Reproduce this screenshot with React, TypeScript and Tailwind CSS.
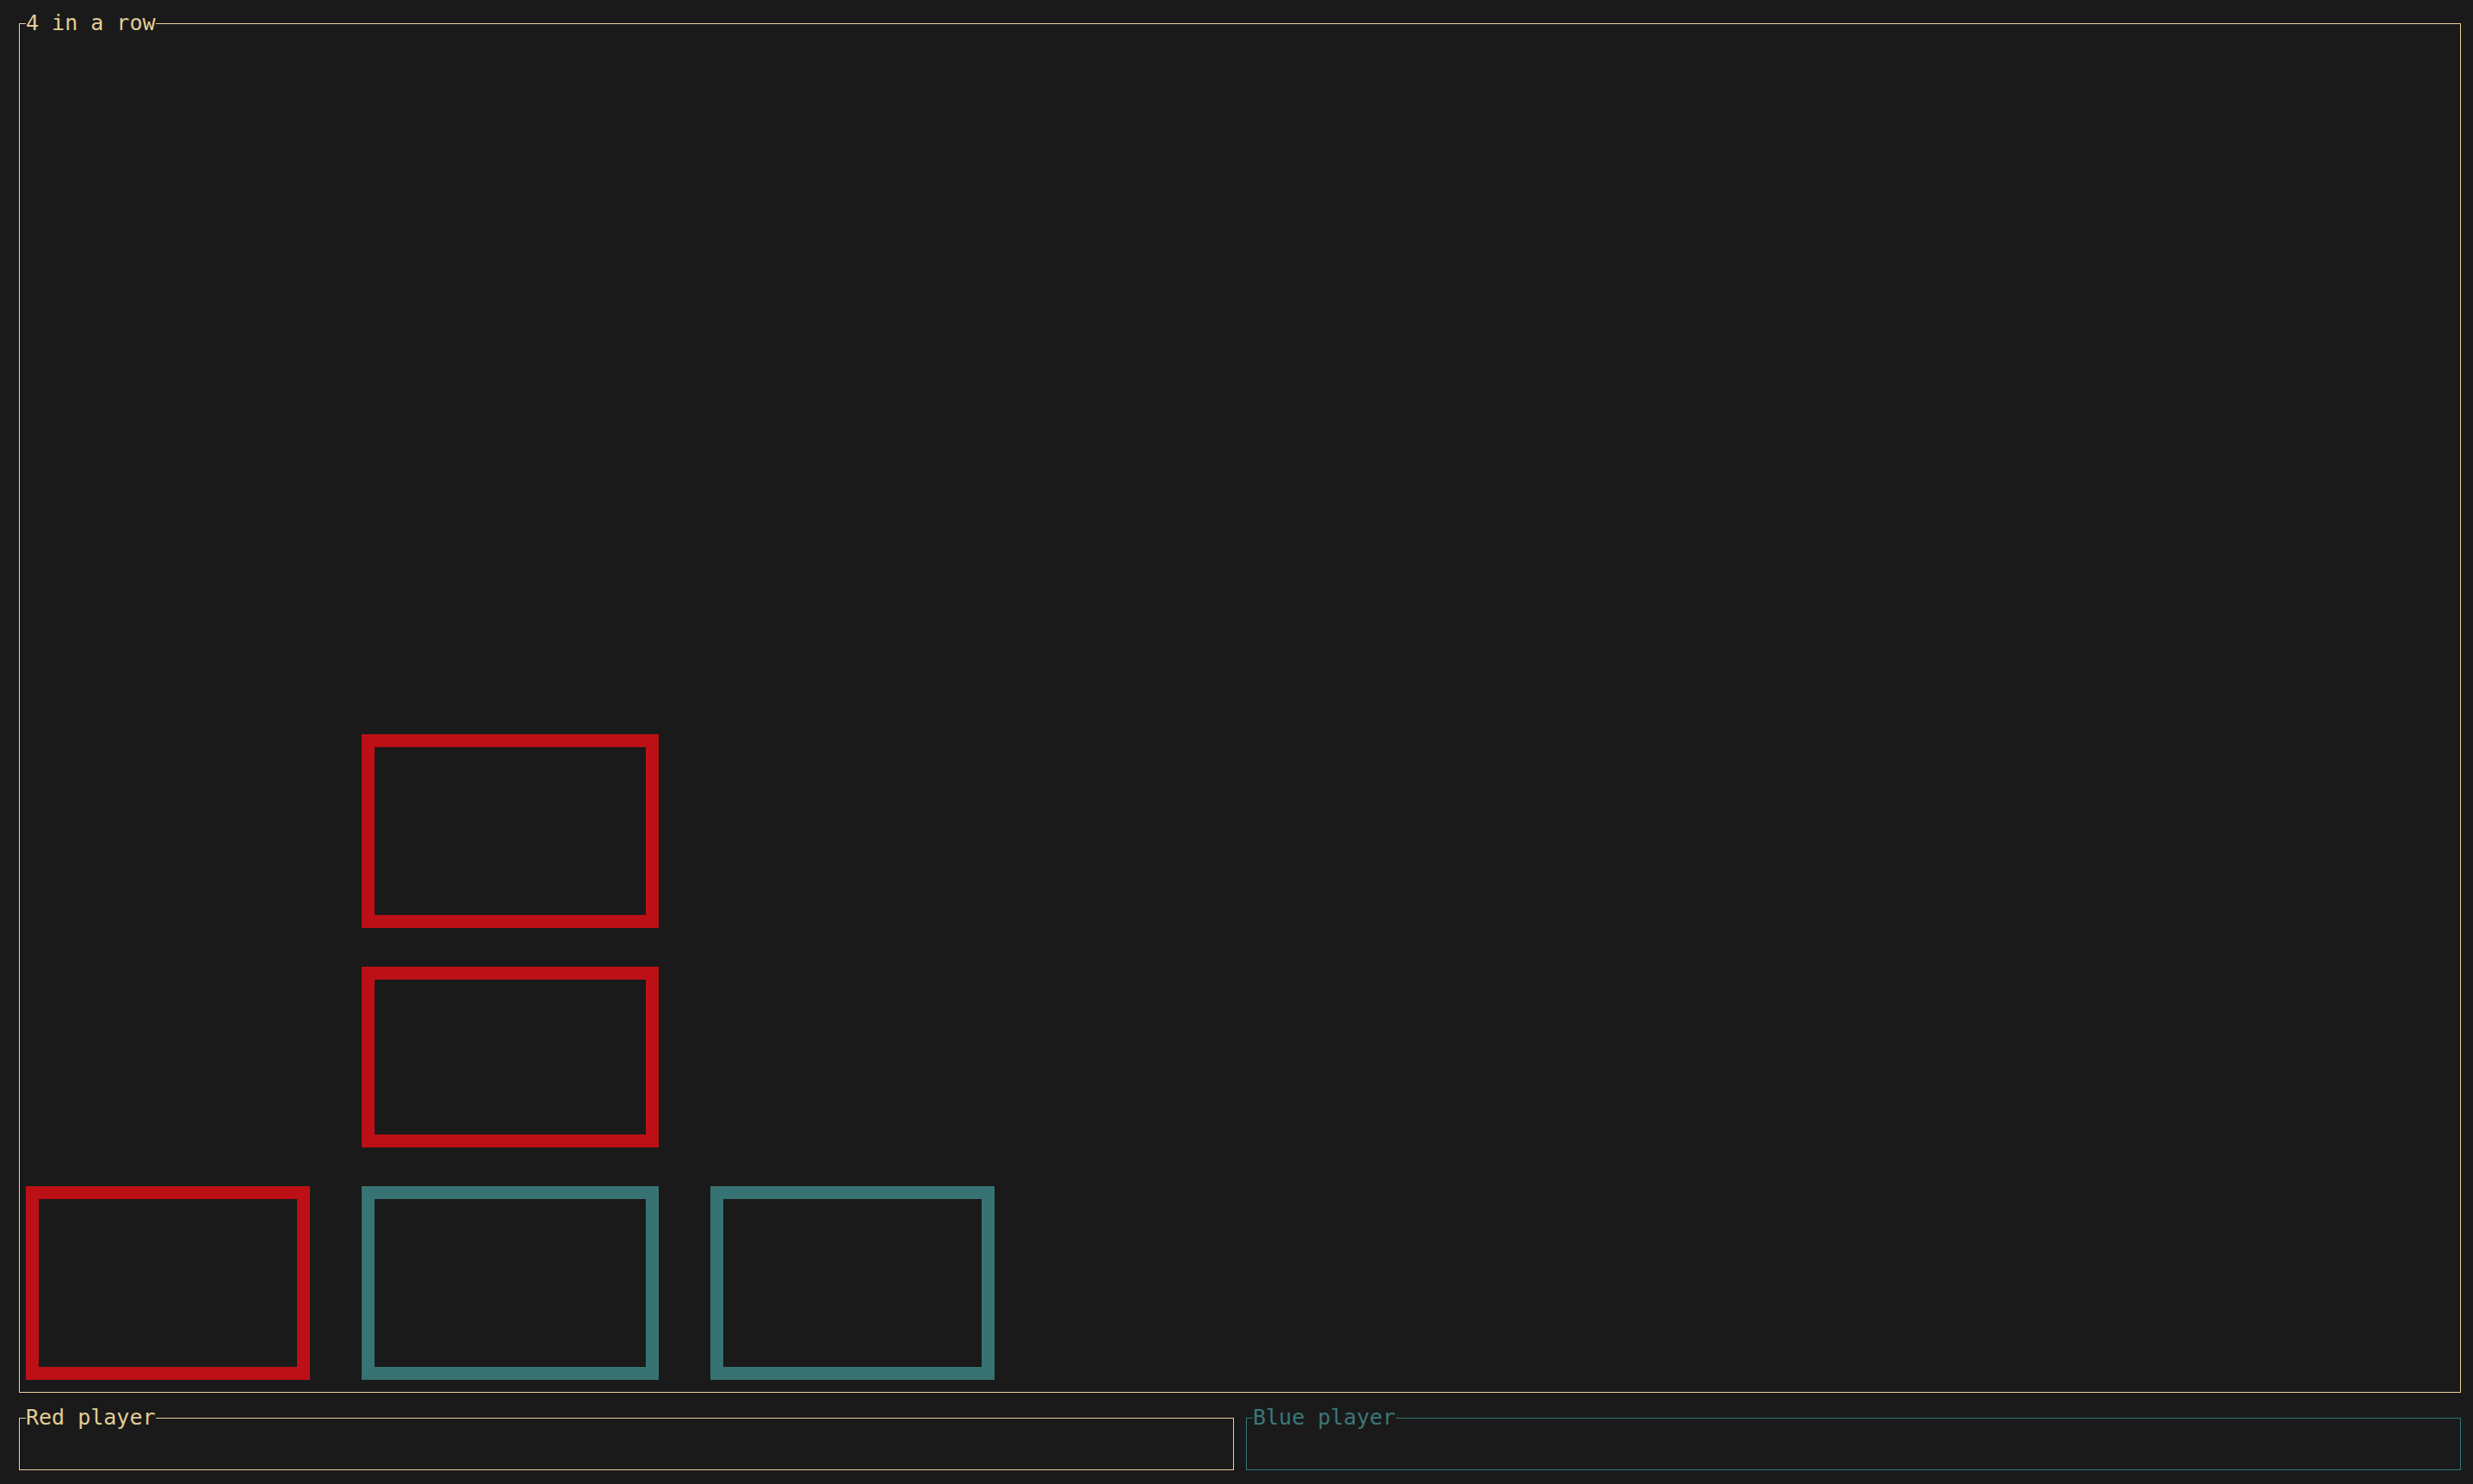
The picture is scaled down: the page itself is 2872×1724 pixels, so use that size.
type Cell = "red" | "blue" | null;

// board rows top -> bottom, 7 columns
const board: Cell[][] = [
  [null, null, null, null, null, null, null],
  [null, null, null, null, null, null, null],
  [null, null, null, null, null, null, null],
  [null, "red", null, null, null, null, null],
  [null, "red", null, null, null, null, null],
  ["red", "blue", "blue", null, null, null, null],
];

const pieceWidths = ["w-[330px]", "w-[345px]", "w-[330px]", "w-[345px]", "w-[330px]", "w-[345px]", "w-[330px]"];

function Panel({
  title,
  tone,
  className,
  children,
}: {
  title: string;
  tone: "cream" | "teal";
  className?: string;
  children?: React.ReactNode;
}) {
  const border = tone === "cream" ? "border-[#e6d29c]" : "border-[#377574]";
  const text = tone === "cream" ? "text-[#e2cd95]" : "text-[#3a7878]";
  return (
    <div className={`relative border ${border} ${className ?? ""}`}>
      <span className={`absolute left-[7px] top-[-16px] h-[30px] bg-[#1a1a1a] leading-[30px] ${text}`}>{title}</span>
      {children}
    </div>
  );
}

export default function App() {
  return (
    <div
      className="w-[2872px] h-[1724px] overflow-hidden bg-[#1a1a1a] pl-[22px] pt-[27px] text-[25px] leading-[30px]"
      style={{ fontFamily: '"DejaVu Sans Mono", "Liberation Mono", monospace' }}
    >
      <Panel title="4 in a row" tone="cream" className="w-[2836px] h-[1591px] pl-[7px] pt-[14px]">
        <div className="grid grid-cols-[390px_405px_405px_405px_405px_405px_405px] grid-rows-[255px_256px_255px_270px_255px_270px]">
          {board.map((row, r) =>
            row.map((cell, c) => (
              <div key={`${r}-${c}`} className="pt-[45px]">
                {cell && (
                  <div
                    className={`h-full border-[15px] ${pieceWidths[c]} ${
                      cell === "red" ? "border-[#bd1016]" : "border-[#377373]"
                    }`}
                  />
                )}
              </div>
            ))
          )}
        </div>
      </Panel>

      <div className="mt-[29px] flex gap-[14px]">
        <Panel title="Red player" tone="cream" className="w-[1411px] h-[61px]" />
        <Panel title="Blue player" tone="teal" className="w-[1411px] h-[61px]" />
      </div>
    </div>
  );
}
